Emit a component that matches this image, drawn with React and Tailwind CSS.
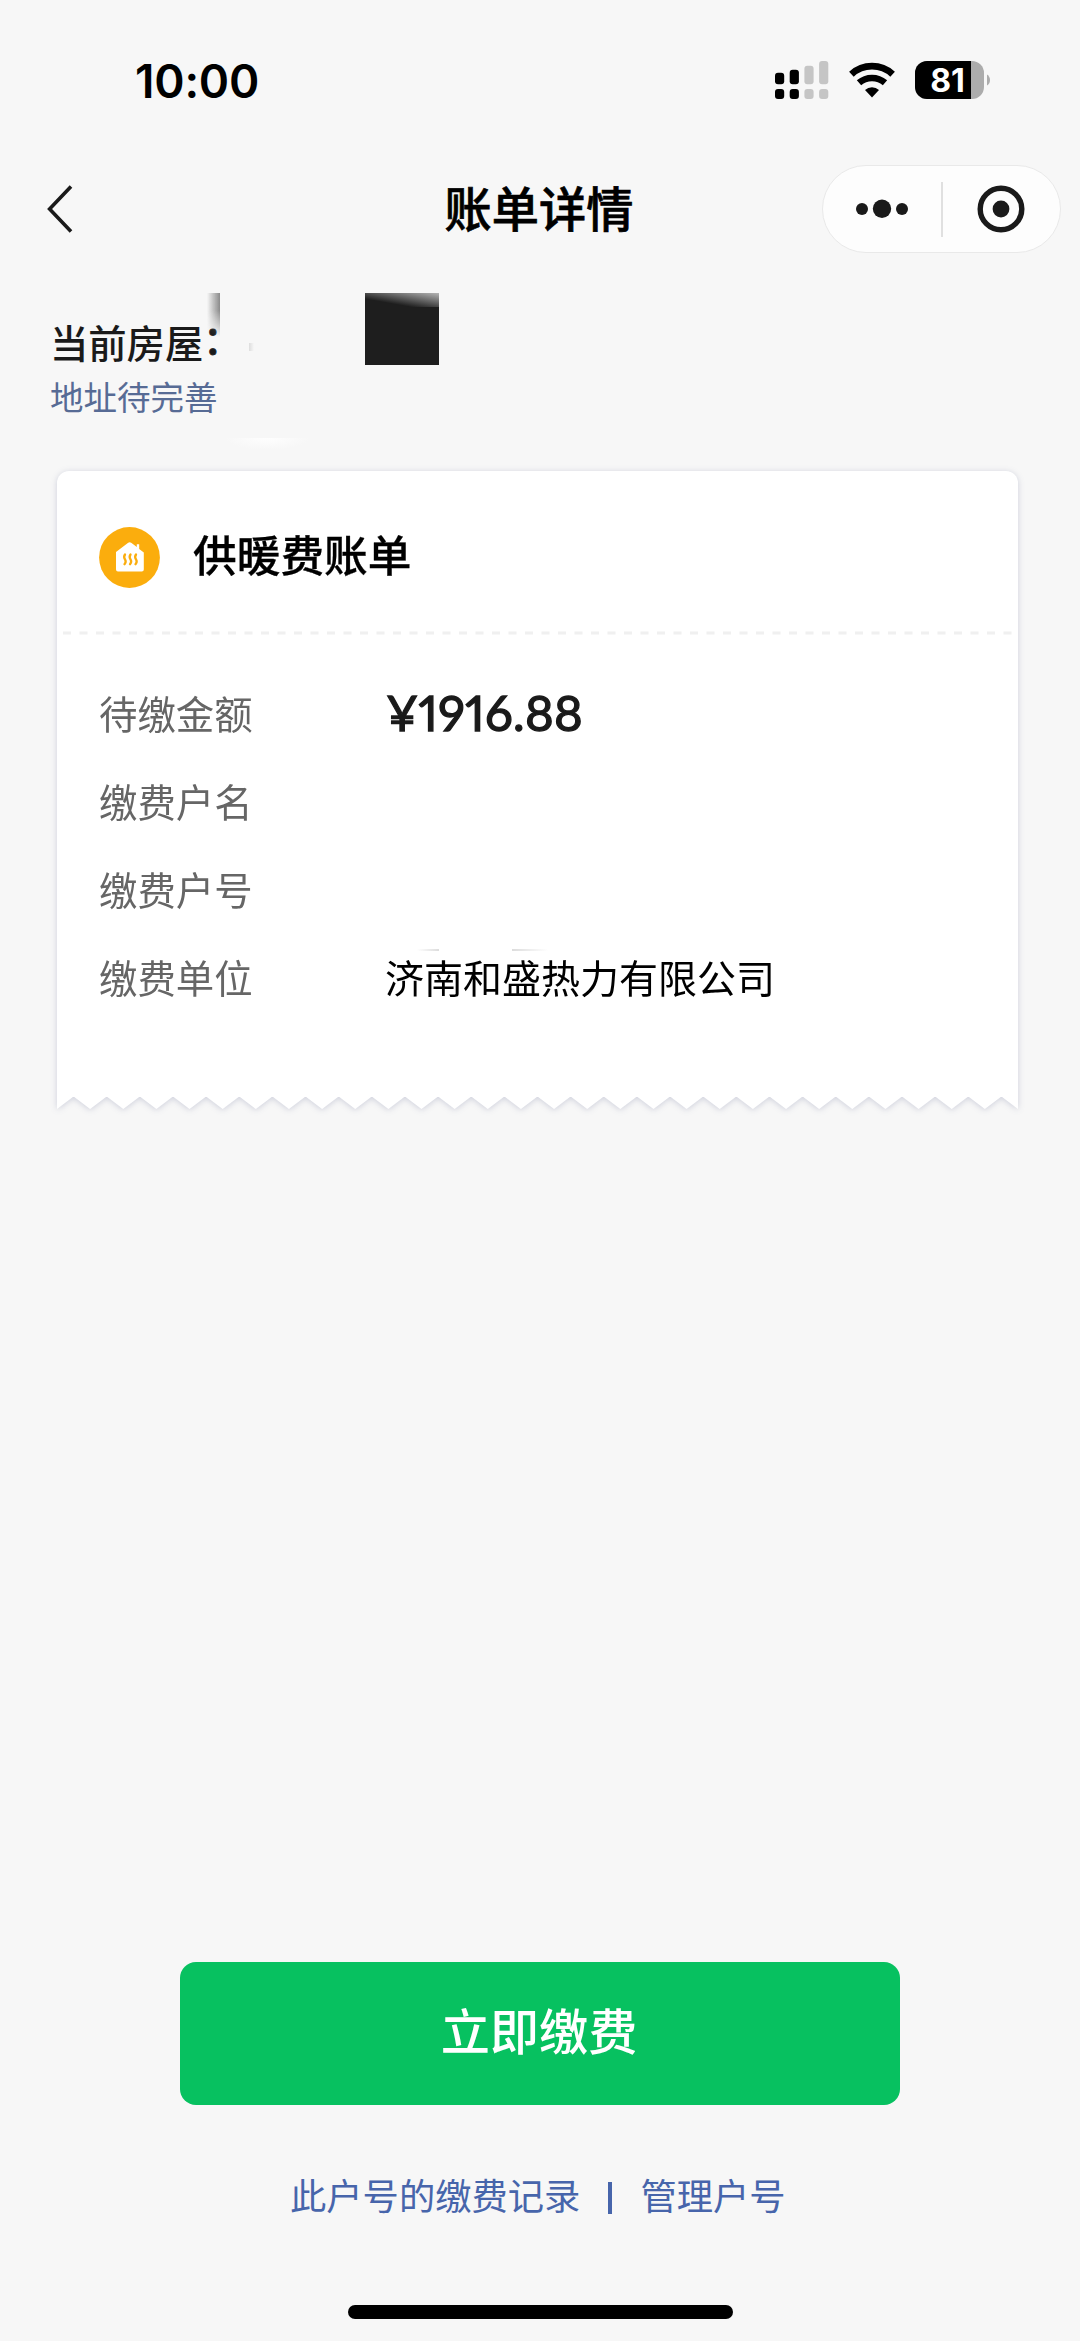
import React from 'react';

const bill = [
  { label: '待缴金额', value: '¥1916.88', amount: true },
  { label: '缴费户名', value: '' },
  { label: '缴费户号', value: '' },
  { label: '缴费单位', value: '济南和盛热力有限公司' }
];

const TEETH = 29;

const StatusBar = () => (
  <div className="h-[162px] pl-[135px] pr-[90px] pt-[46px] flex justify-between items-start">
    <span className="font-['Inter'] font-semibold text-[46px] leading-[70px] tracking-[-0.2px]">10:00</span>
    <div className="flex items-center pt-[14px]">
      <svg width="54" height="40" viewBox="0 0 54 40">
        <rect x="0" y="12.7" width="9.2" height="11.6" rx="3" />
        <rect x="14.7" y="9.7" width="9.2" height="14.6" rx="3" />
        <rect x="29.4" y="5.7" width="9.2" height="18.6" rx="3" fill="#c5c5c5" />
        <rect x="44.1" y="1" width="9.2" height="23.3" rx="3" fill="#c5c5c5" />
        <rect x="0" y="29" width="9.2" height="10" rx="3" />
        <rect x="14.7" y="29" width="9.2" height="10" rx="3" />
        <rect x="29.4" y="29" width="9.2" height="10" rx="3" fill="#c5c5c5" />
        <rect x="44.1" y="29" width="9.2" height="10" rx="3" fill="#c5c5c5" />
      </svg>
      <svg className="ml-[20px]" width="46" height="40" viewBox="0 0 46 40">
        <path d="M2.4 14.2a30.500 30.500 0 0 1 41.200 0" fill="none" stroke="#000" strokeWidth="6.800" />
        <path d="M10 22.800a19.800 19.800 0 0 1 26 0" fill="none" stroke="#000" strokeWidth="6.600" />
        <path d="M16 30a10.400 10.400 0 0 1 14 0L23 37.500Z" />
      </svg>
      <div className="ml-[20px] relative w-[69px] h-[38px] rounded-[12px] overflow-hidden bg-[#acacac]">
        <div className="w-[56px] h-full bg-black" />
        <span className="absolute inset-0 pr-[4px] text-center text-white font-['Inter'] font-bold text-[32px] leading-[39px]">81</span>
      </div>
      <svg className="ml-[3px]" width="3" height="12" viewBox="0 0 3 12">
        <path d="M0 0.5Q3 2.5 3 6T0 11.5Z" fill="#acacac" />
      </svg>
    </div>
  </div>
);

const NavBar = () => (
  <div className="h-[94px] pl-[46px] pr-[19px] flex items-center justify-between relative">
    <svg width="30" height="50" viewBox="0 0 30 50">
      <path d="M25 2.5 3.6 25 25 47.5" fill="none" stroke="#1a1a1a" strokeWidth="3.6" />
    </svg>
    <h1 className="absolute inset-x-0 -top-[2px] pr-[2px] text-center font-medium text-[47.2px] leading-[94px] [-webkit-text-stroke:0.7px_black] pointer-events-none">账单详情</h1>
    <div className="relative w-[239px] h-[88px] rounded-full border border-[#e9e9e9] bg-[#fdfdfd] flex items-center">
      <svg className="ml-[33px]" width="52" height="20" viewBox="0 0 52 20" fill="#1a1a1a">
        <circle cx="6" cy="10" r="6" />
        <circle cx="26" cy="9.7" r="9.2" />
        <circle cx="46" cy="10" r="6" />
      </svg>
      <div className="ml-[33px] w-[2px] h-[55px] bg-[#e0e0e0]" />
      <svg className="ml-[34px]" width="48" height="48" viewBox="0 0 48 48">
        <circle cx="24" cy="24" r="20.8" fill="none" stroke="#1a1a1a" strokeWidth="5.4" />
        <circle cx="24" cy="24" r="8.4" fill="#1a1a1a" />
      </svg>
    </div>
  </div>
);

const HouseInfo = () => (
  <div className="h-[215px] pl-[50px] pt-[58px] relative">
    <div className="font-medium text-[38.3px] leading-[56px] text-[#1a1a1a]">
      当前房屋<span className="relative -top-[4px] [-webkit-text-stroke:0.8px_#1a1a1a]">：</span>
    </div>
    <div className="mt-[2px] text-[33.5px] leading-[48px] text-[#576b95]">地址待完善</div>
    {/* masked address */}
    <div className="absolute left-[207px] top-[37px] w-[13px] h-[44px] bg-linear-to-r from-transparent to-[#8a8a8a] mask-b-from-40%" />
    <div className="absolute left-[365px] top-[37px] w-[74px] h-[72px] bg-[#1e1e1e]">
      <div className="h-[14px] bg-[linear-gradient(190deg,#b5b5b5_0%,#1e1e1e_70%)]" />
    </div>
    <div className="absolute left-[249px] top-[87px] w-[5px] h-[8px] bg-linear-to-r from-[#dddddd] to-[#f7f7f7]" />
    <div className="absolute left-[225px] top-[182px] w-[85px] h-[12px] bg-[radial-gradient(ellipse_at_top,#fefefe,#f7f7f7_70%)]" />
  </div>
);

const HeatingIcon = () => (
  <svg width="61" height="61" viewBox="0 0 61 61">
    <circle cx="30.5" cy="30.5" r="30.4" fill="#fbad0d" />
    <path d="M17 25 29.2 15.8q1.5-1 3 0l5.6 4.2V17.3h2.4v4.7l4.6 3.5V42.5q0 2-2 2H19q-2 0-2-2Z" fill="#fff" />
    <g fill="none" stroke="#fbad0d" strokeWidth="2.3" strokeLinecap="round">
      <path d="M26 27.500c-2 3-.5 4 .3 5.500s.2 3-.8 4.200" />
      <path d="M31.500 27.500c-2 3-.5 4 .3 5.500s.2 3-.8 4.200" />
      <path d="M37 27.500c-2 3-.5 4 .3 5.500s.2 3-.8 4.200" />
    </g>
  </svg>
);

const TornEdge = () => {
  const step = 961 / TEETH;
  let d = 'M0 0V13';
  for (let i = 0; i < TEETH; i++) {
    d += `L${(i + 0.5) * step} 0.5L${(i + 1) * step} 13`;
  }
  return (
    <svg className="block -mt-px" width="961" height="14" viewBox="0 0 961 14">
      <path d={d + 'V0Z'} fill="#fff" />
    </svg>
  );
};

const BillCard = () => (
  <div className="ml-[57px] w-[961px] drop-shadow-[0_1px_3px_rgba(40,50,110,0.2)]">
    <div className="relative h-[626px] bg-white rounded-t-[12px]">
      <div className="h-[160px] pl-[42px] pt-[12px] flex items-center">
        <HeatingIcon />
        <h2 className="ml-[33px] mb-[8px] font-medium text-[43.7px] leading-[64px] [-webkit-text-stroke:0.3px_black]">供暖费账单</h2>
      </div>
      <svg className="ml-[6px] block" width="950" height="4" viewBox="0 0 950 4">
        <path d="M0 2H950" stroke="#f0f0f0" strokeWidth="3" strokeDasharray="8 8.5" />
      </svg>
      <div className="pt-[33px] pl-[42px]">
        {bill.map(row => (
          <div key={row.label} className="h-[88px] flex items-center">
            <span className="w-[286px] pt-px text-[38.4px] text-[#666]">{row.label}</span>
            {row.amount ? (
              <span className="ml-px pt-px font-['Lato'] proportional-nums text-[49px] tracking-[0.3px] text-[#1a1a1a] [-webkit-text-stroke:1.3px_#1a1a1a]">{row.value}</span>
            ) : (
              <span className="text-[39px]">{row.value}</span>
            )}
          </div>
        ))}
      </div>
      {/* traces of the masked account number */}
      <div className="absolute left-[360px] top-[478px] w-[22px] h-[2px] bg-linear-to-r from-white to-[#dcdcdc]" />
      <div className="absolute left-[455px] top-[478px] w-[36px] h-[2px] bg-linear-to-l from-white to-[#dcdcdc]" />
    </div>
    <TornEdge />
  </div>
);

const App = () => (
  <div className="w-[1080px] h-[2341px] bg-[#f7f7f7] text-black font-['Noto_Sans_CJK_SC',sans-serif] flex flex-col overflow-hidden">
    <StatusBar />
    <NavBar />
    <HouseInfo />
    <BillCard />
    <div className="mt-auto flex flex-col items-center pb-[22px]">
      <button className="w-[720px] h-[143px] pb-[9px] pr-[2px] rounded-[16px] bg-[#07c160] text-white font-medium text-[49.2px]">立即缴费</button>
      <div className="mt-[61px] h-[56px] w-full pl-[290px] flex items-center text-[36.3px] text-[#4765ab]">
        <a>此户号的缴费记录</a>
        <span className="ml-[28px] mt-[7px] w-[4px] h-[32px] bg-[#4765ab]" />
        <a className="ml-[28px]">管理户号</a>
      </div>
      <div className="mt-[83px] w-[385px] h-[14px] rounded-full bg-black" />
    </div>
  </div>
);

export default App;
